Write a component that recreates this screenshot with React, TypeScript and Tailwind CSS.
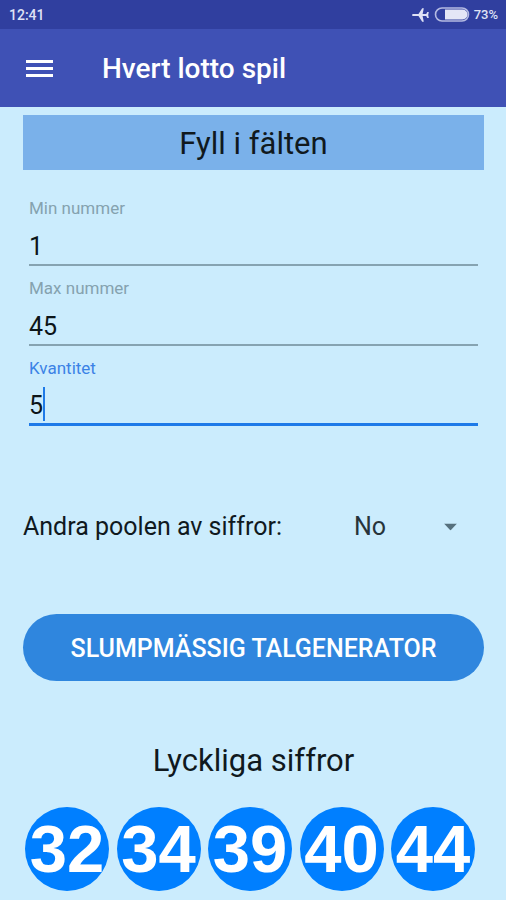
import { useState } from "react";

type FieldProps = {
  id: string;
  label: string;
  value: string;
  active?: boolean;
  onChange: (value: string) => void;
};

function NumberField({ id, label, value, active = false, onChange }: FieldProps) {
  return (
    <div className="pt-3">
      <label
        htmlFor={id}
        className={`block h-5 text-[17px] leading-5 ${active ? "text-[#3b82e6]" : "text-[#85a2af]"}`}
      >
        {label}
      </label>
      <div className="relative">
        <input
          id={id}
          type="text"
          inputMode="numeric"
          value={value}
          onChange={(event) => onChange(event.target.value)}
          className={`block h-12 w-full rounded-none bg-transparent pt-[10px] text-[25px] leading-8 text-[#0c1519] outline-none ${
            active ? "border-b-3 border-[#1e7ae8] caret-transparent" : "border-b-2 border-[#86a3b1]"
          }`}
        />
        {active && (
          <div className="pointer-events-none absolute top-2 left-0 flex h-9 items-center text-[25px]" aria-hidden="true">
            <span className="invisible">{value}</span>
            <span className="h-[34px] w-[2px] bg-[#1e7ae8]" />
          </div>
        )}
      </div>
    </div>
  );
}

function StatusBar() {
  return (
    <div className="flex h-[29px] items-center justify-between bg-[#303f9f] pr-2 pl-[9px] text-[#dfe2f5]">
      <span className="pt-[2px] text-[14px] font-medium">12:41</span>
      <div className="flex items-center gap-1">
        <svg className="h-4 w-[18px]" viewBox="0 0 18 16" fill="currentColor" aria-hidden="true">
          <path d="M0 8c0-.7.700-1.100 1.600-1.100h4.900L10.200 1.300h1.600L10.600 6.900h3.600L15.300 5h1.500L16.200 8l.6 3h-1.500l-1.100-1.900h-3.600l1.200 5.600h-1.600L6.500 9.100H1.600C.7 9.100 0 8.700 0 8z" />
        </svg>
        <svg className="h-[15px] w-9" viewBox="0 0 36 15" aria-hidden="true">
          <rect x="1.500" y="1" width="33" height="13" rx="6.500" fill="none" stroke="#b4bae2" strokeWidth="1.600" />
          <path d="M11 2.500h17.500a5 5 0 0 1 0 10H11z" fill="#e4e6f6" />
        </svg>
        <span className="text-[13px] font-medium">73%</span>
      </div>
    </div>
  );
}

const luckyNumbers = [32, 34, 39, 40, 44];

export default function App() {
  const [min, setMin] = useState("1");
  const [max, setMax] = useState("45");
  const [quantity, setQuantity] = useState("5");
  const [pool, setPool] = useState("No");

  return (
    <div className="min-h-screen bg-[#cbecfd] font-['Roboto',sans-serif] text-[#10191e]">
      <StatusBar />
      <header className="flex h-[78px] items-center bg-[#3f51b5] pl-[26px] text-white">
        <button type="button" aria-label="Menu" className="flex w-[27px] flex-col gap-1">
          <span className="h-[3px] w-full bg-white" />
          <span className="h-[3px] w-full bg-white" />
          <span className="h-[3px] w-full bg-white" />
        </button>
        <h1 className="pt-[2px] pl-[49px] text-[28px] font-medium">Hvert lotto spil</h1>
      </header>

      <main className="pt-2 pr-[22px] pb-2 pl-[23px]">
        <h2 className="bg-[#7ab1ea] pt-[2px] text-center text-[31px] leading-[53px]">Fyll i fälten</h2>

        <form onSubmit={(event) => event.preventDefault()}>
          <div className="mt-4 px-[6px]">
            <NumberField id="min" label="Min nummer" value={min} onChange={setMin} />
            <NumberField id="max" label="Max nummer" value={max} onChange={setMax} />
            <NumberField id="quantity" label="Kvantitet" value={quantity} active onChange={setQuantity} />
          </div>

          <div className="mt-20 flex h-[42px] items-center justify-between">
            <label htmlFor="pool" className="text-[25px]">
              Andra poolen av siffror:
            </label>
            <div className="relative w-[130px]">
              <select
                id="pool"
                value={pool}
                onChange={(event) => setPool(event.target.value)}
                className="w-full appearance-none bg-transparent text-[25px] text-[#27343b] outline-none"
              >
                <option>No</option>
                <option>Yes</option>
              </select>
              <svg
                className="pointer-events-none absolute top-1/2 right-[27px] h-[7px] w-[13px] -translate-y-1/2"
                viewBox="0 0 13 7"
                aria-hidden="true"
              >
                <path d="M0 0h13L6.500 7z" fill="#56707d" />
              </svg>
            </div>
          </div>

          <button
            type="submit"
            className="mt-[66px] block h-[67px] w-full rounded-full bg-[#2f86de] pt-[2px] text-[25px] font-medium text-white"
          >
            SLUMPMÄSSIG TALGENERATOR
          </button>
        </form>

        <h2 className="mt-[60px] text-center text-[31px] leading-10">Lyckliga siffror</h2>
        <ul className="mt-[26px] flex justify-between pr-[9px] pl-[2px]">
          {luckyNumbers.map((number) => (
            <li
              key={number}
              className="flex size-[84px] items-center justify-center rounded-full bg-[#007fff] font-['Liberation_Sans',sans-serif] text-[67px] font-bold text-white"
            >
              {number}
            </li>
          ))}
        </ul>
      </main>
    </div>
  );
}
